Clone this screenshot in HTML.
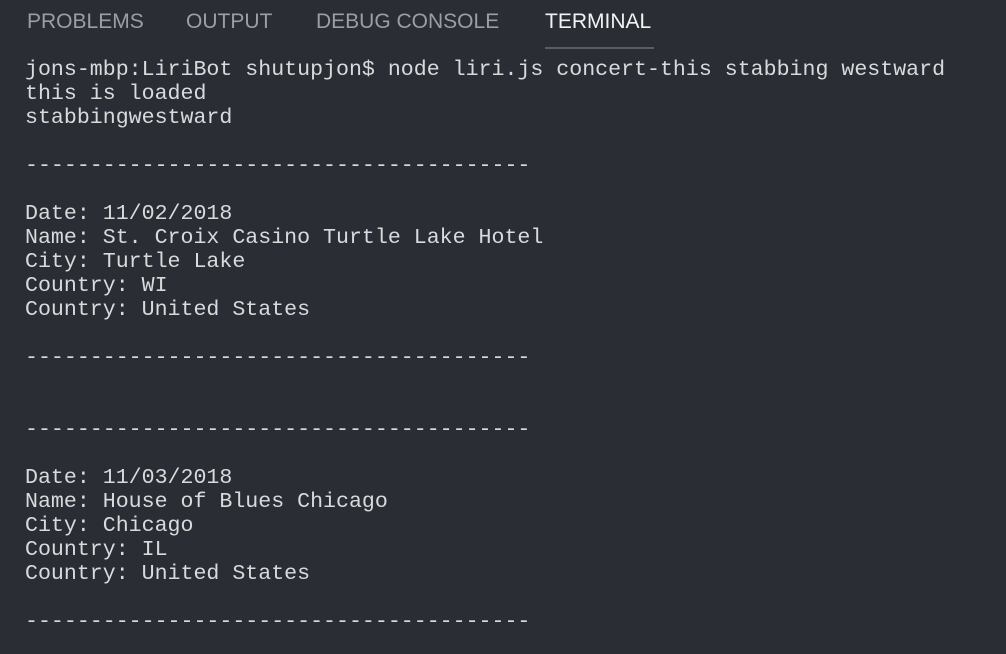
<!DOCTYPE html>
<html><head><style>
body{margin:0;width:1006px;height:654px;background:#2a2d34;overflow:hidden;position:relative}
.t{position:absolute;top:10px;font:21px "Liberation Sans",sans-serif;color:#9b9ea5;white-space:nowrap}
pre{position:absolute;left:25px;top:58px;margin:0;font:21.6px/24px "Liberation Mono",monospace;color:#d9dadc}
</style></head><body>
<div class="t" style="left:27px">PROBLEMS</div>
<div class="t" style="left:186px">OUTPUT</div>
<div class="t" style="left:316px">DEBUG CONSOLE</div>
<div class="t" style="left:545px;color:#f2f3f4">TERMINAL</div>
<div style="position:absolute;left:545px;top:47px;width:109px;height:2px;background:#595d65"></div>
<pre>jons-mbp:LiriBot shutupjon$ node liri.js concert-this stabbing westward
this is loaded
stabbingwestward

---------------------------------------

Date: 11/02/2018
Name: St. Croix Casino Turtle Lake Hotel
City: Turtle Lake
Country: WI
Country: United States

---------------------------------------


---------------------------------------

Date: 11/03/2018
Name: House of Blues Chicago
City: Chicago
Country: IL
Country: United States

---------------------------------------</pre>
</body></html>
